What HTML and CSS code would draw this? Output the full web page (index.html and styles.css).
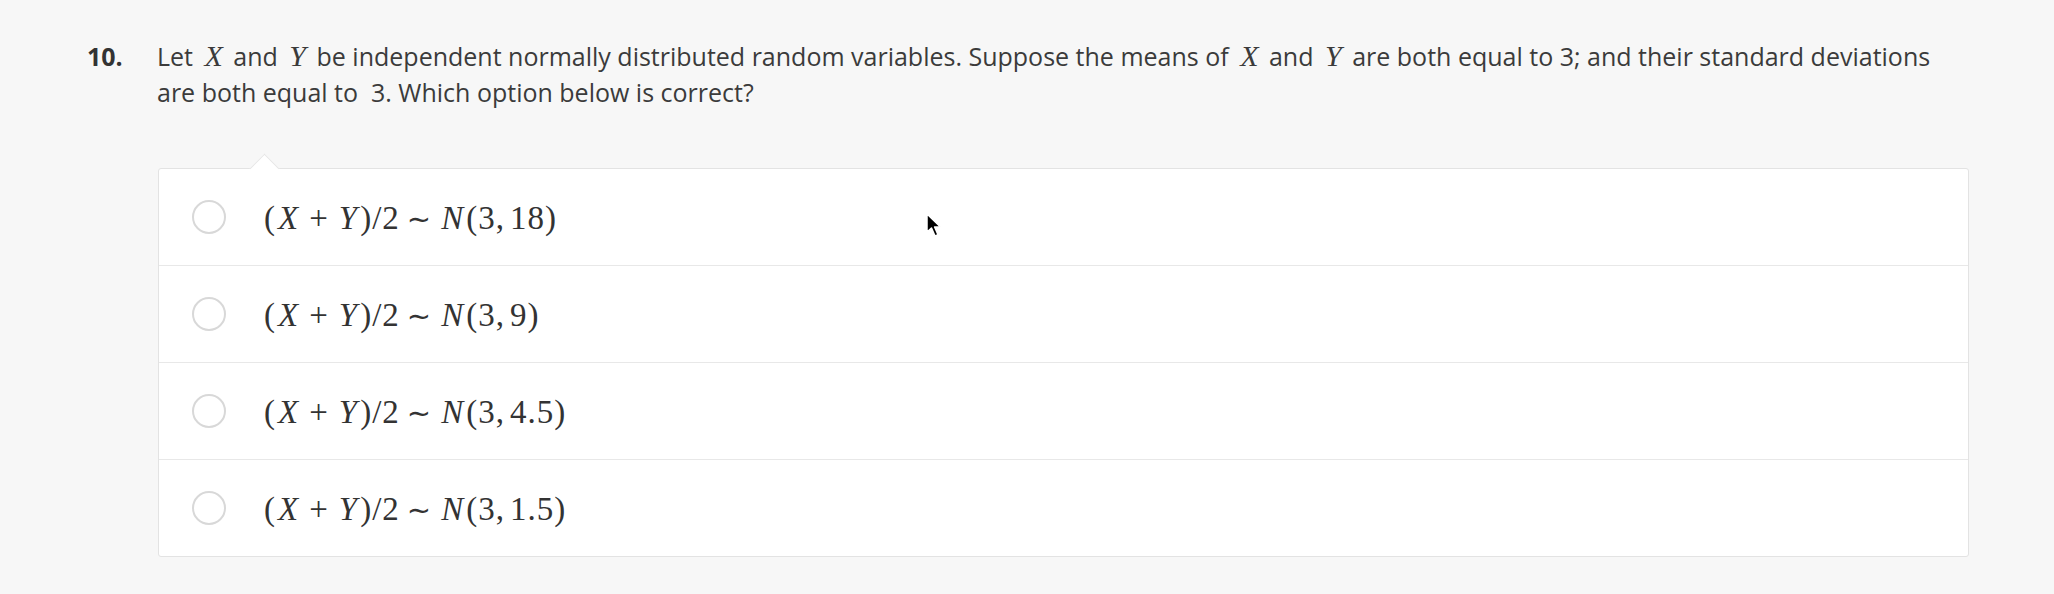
FILE: index.html
```html
<!DOCTYPE html>
<html>
<head>
<meta charset="utf-8">
<link rel="stylesheet" href="styles.css">
</head>
<body>
<div class="question">
  <div class="qnum">10.</div>
  <div class="qtext">Let <span class="mi">X</span> and <span class="mi">Y</span> be independent normally distributed random variables. Suppose the means of <span class="mi">X</span> and <span class="mi">Y</span> are both equal to 3; and their standard deviations are both equal to &nbsp;3. Which option below is correct?</div>
  <div class="options">
    <span class="notch"></span>
    <div class="option">
      <span class="radio"></span>
      <span class="math">(<i>X</i><span class="bin">+</span><i>Y</i>)/2<span class="rel">∼</span><i>N</i>(3,<span class="thin"></span>18)</span>
    </div>
    <div class="option">
      <span class="radio"></span>
      <span class="math">(<i>X</i><span class="bin">+</span><i>Y</i>)/2<span class="rel">∼</span><i>N</i>(3,<span class="thin"></span>9)</span>
    </div>
    <div class="option">
      <span class="radio"></span>
      <span class="math">(<i>X</i><span class="bin">+</span><i>Y</i>)/2<span class="rel">∼</span><i>N</i>(3,<span class="thin"></span>4.5)</span>
    </div>
    <div class="option">
      <span class="radio"></span>
      <span class="math">(<i>X</i><span class="bin">+</span><i>Y</i>)/2<span class="rel">∼</span><i>N</i>(3,<span class="thin"></span>1.5)</span>
    </div>
    <svg class="cursor" width="20" height="28" viewBox="0 0 20 28"><path d="M2 2 L2 20 L6.5 16 L10 24 L13 22.7 L9.6 15 L15.5 15 Z" fill="#000" stroke="#fff" stroke-width="1.5" stroke-linejoin="round"/></svg>
  </div>
</div>
</body>
</html>
```
FILE: styles.css
```css
html, body {
  margin: 0;
  padding: 0;
  background: #f7f7f7;
}
body {
  width: 2054px;
  height: 594px;
  overflow: hidden;
  font-family: "Open Sans", "Liberation Sans", sans-serif;
  color: #3b3b3b;
}
.question {
  display: grid;
  grid-template-columns: 70px 1812px;
  margin-left: 87px;
  padding-top: 38px;
}
.qnum {
  font-weight: 700;
  font-size: 25px;
  line-height: 36px;
  color: #333;
}
.qtext {
  font-size: 25px;
  line-height: 36px;
}
.mi {
  font-family: "Liberation Serif", "DejaVu Serif", serif;
  font-style: italic;
  font-size: 30px;
  line-height: 0;
  padding: 0 4px 0 5px;
}
.options {
  grid-column: 2;
  margin-top: 58px;
  margin-left: 1px;
  position: relative;
  background: #fff;
  border: 1px solid #e3e3e3;
  border-radius: 3px;
  width: 1809px;
}
.notch {
  position: absolute;
  top: -11px;
  left: 95px;
  width: 20px;
  height: 20px;
  background: #fff;
  border-top: 1px solid #e6e6e6;
  border-left: 1px solid #e6e6e6;
  transform: rotate(45deg);
}
.option {
  display: flex;
  align-items: center;
  height: 96px;
  padding-left: 33px;
  border-top: 1px solid #e8e8e8;
}
.notch + .option {
  border-top: none;
}
.radio {
  width: 30px;
  height: 30px;
  border: 2px solid #d8d8d8;
  border-radius: 50%;
  background: #fff;
  flex: none;
}
.math {
  margin-left: 38px;
  font-family: "Liberation Serif", "DejaVu Serif", serif;
  font-size: 33px;
  color: #333;
  letter-spacing: 1px;
  position: relative;
  top: 1px;
}
.math i {
  padding: 0 2px;
}
.bin {
  margin: 0 8px;
}
.rel {
  margin: 0 7px;
  font-family: "DejaVu Sans", sans-serif;
  font-size: 29px;
}
.thin {
  display: inline-block;
  width: 5px;
}
.cursor {
  position: absolute;
  top: 43px;
  left: 766px;
}
```
